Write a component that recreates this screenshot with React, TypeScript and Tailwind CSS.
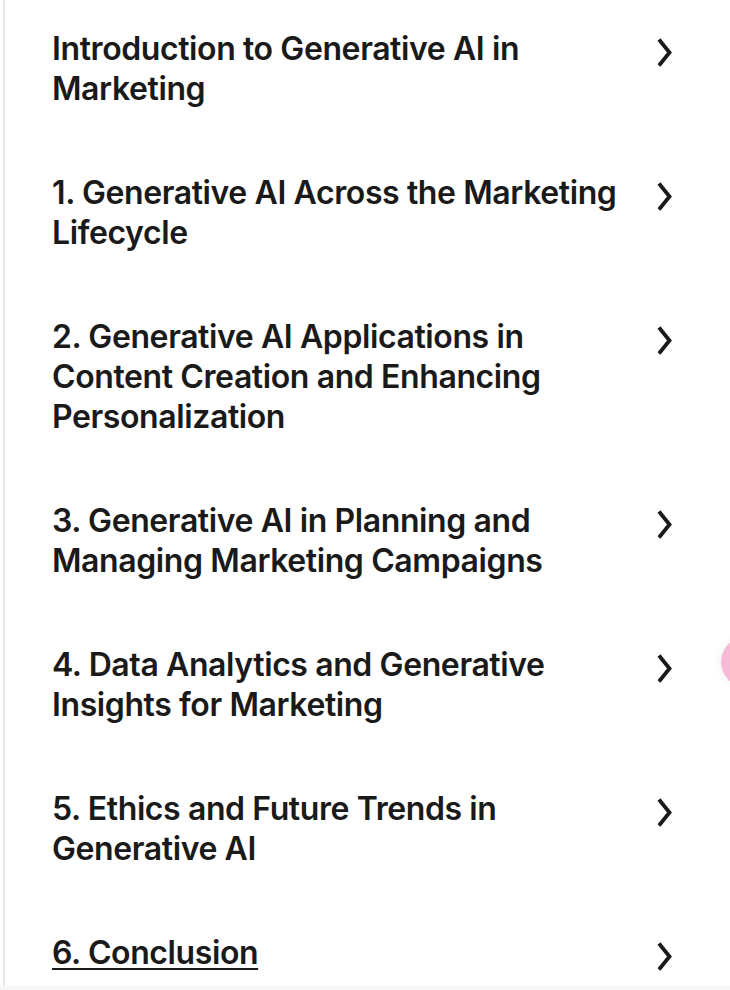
const items = [
  { title: 'Introduction to Generative AI in Marketing' },
  { title: '1. Generative AI Across the Marketing Lifecycle' },
  { title: '2. Generative AI Applications in Content Creation and Enhancing Personalization' },
  { title: '3. Generative AI in Planning and Managing Marketing Campaigns' },
  { title: '4. Data Analytics and Generative Insights for Marketing' },
  { title: '5. Ethics and Future Trends in Generative AI' },
  { title: '6. Conclusion', active: true },
]

function Chevron() {
  return (
    <svg width="18" height="30" viewBox="0 0 18 30" className="shrink-0 mt-[9px]">
      <polyline
        points="3,1.5 13.5,14.5 3,27.5"
        fill="none"
        stroke="#1a1a1a"
        strokeWidth="3.8"
        strokeLinejoin="miter"
      />
    </svg>
  )
}

export default function App() {
  return (
    <div className="relative flex h-[990px] w-[730px] flex-col overflow-hidden bg-white" style={{ fontFamily: 'Inter, "Noto Sans", sans-serif' }}>
      <div className="ml-[3px] flex-1 border-l-2 border-[#e8e8e8]">
        <ul className="flex flex-col gap-16 pt-[29px] pl-[47px]">
          {items.map(item => (
            <li key={item.title} className="flex items-start">
              <a
                href="#"
                className={`w-[590px] text-[32px] font-semibold leading-10 tracking-[-0.4px] text-[#1a1a1a] ${
                  item.active ? 'underline decoration-2 underline-offset-[4px]' : ''
                }`}
              >
                {item.title}
              </a>
              <div className="ml-[14px]">
                <Chevron />
              </div>
            </li>
          ))}
        </ul>
      </div>
      <div className="h-[4px] bg-[#f6f6f6]" />

      {/* floating pink button */}
      <div className="absolute left-[721px] top-[637px] h-[50px] w-[50px] rounded-full bg-[#f8b9d6] shadow-[0_0_8px_rgba(0,0,0,0.08)]" />
    </div>
  )
}
